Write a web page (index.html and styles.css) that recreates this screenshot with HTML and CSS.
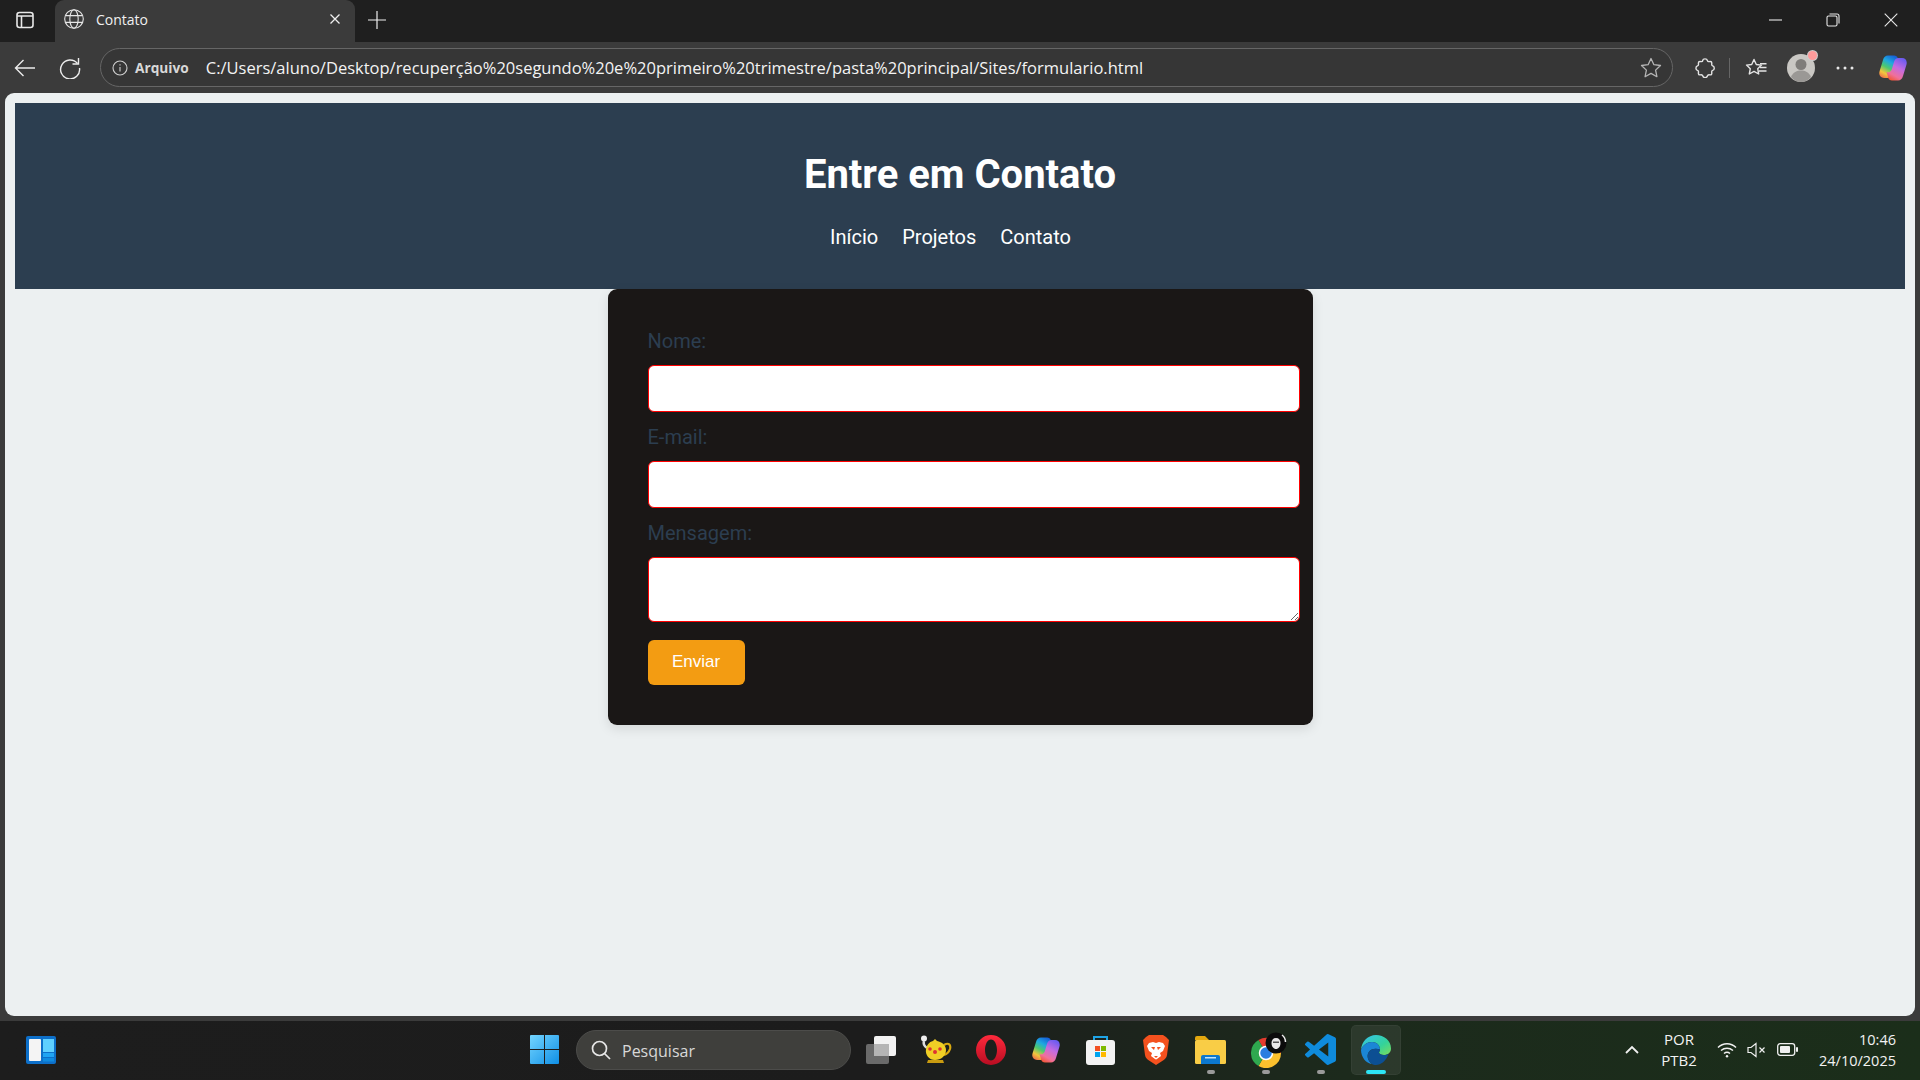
FILE: index.html
```html
<!DOCTYPE html>
<html lang="pt-BR">
<head>
<meta charset="utf-8">
<title>Contato</title>
<link rel="stylesheet" href="styles.css">
</head>
<body>
<div class="window">
  <div class="tabstrip">
    <div class="tabtoggle">
      <svg width="18" height="18" viewBox="0 0 18 18" fill="none" stroke="#e8e8e8" stroke-width="1.6"><rect x="1" y="1.5" width="16" height="15" rx="2.5"/><path d="M1 5h16M5.5 5v11.5"/></svg>
    </div>
    <div class="tab">
      <svg width="20" height="20" viewBox="0 0 20 20" fill="none" stroke="#e6e6e6" stroke-width="1.1"><circle cx="10" cy="10" r="9.3"/><ellipse cx="10" cy="10" rx="4.2" ry="9.3"/><path d="M1.4 6.6h17.2M1.4 13.4h17.2"/></svg>
      <span class="tab-title">Contato</span>
      <svg class="tab-close" width="12" height="12" viewBox="0 0 12 12" stroke="#f0f0f0" stroke-width="1.3"><path d="M1.5 1.5l9 9M10.5 1.5l-9 9"/></svg>
    </div>
    <svg class="newtab" width="18" height="18" viewBox="0 0 18 18" stroke="#efefef" stroke-width="1.2"><path d="M9 0v18M0 9h18"/></svg>
    <div class="winbtns">
      <svg width="14" height="14" viewBox="0 0 14 14" stroke="#e8e8e8" stroke-width="1.1"><path d="M1 7h13"/></svg>
      <svg width="14" height="14" viewBox="0 0 14 14" fill="none" stroke="#e8e8e8" stroke-width="1.1"><rect x="1" y="3" width="10" height="10" rx="1.5"/><path d="M3.5 1H11a2 2 0 0 1 2 2v7.500"/></svg>
      <svg width="14" height="14" viewBox="0 0 14 14" stroke="#e8e8e8" stroke-width="1.1"><path d="M.7.7l12.600 12.600M13.300.7L.7 13.300"/></svg>
    </div>
  </div>

  <div class="toolbar">
    <svg class="tb-back" width="22" height="18" viewBox="0 0 22 18" fill="none" stroke="#ececec" stroke-width="1.4"><path d="M21 9H1.500M9.500 1L1.500 9l8 8"/></svg>
    <svg class="tb-reload" width="22" height="22" viewBox="0 0 22 22" fill="none" stroke="#ececec" stroke-width="1.4"><path d="M18.500 6.500A9.500 9.500 0 1 0 20.500 11"/><path d="M19.500 1v6h-6"/></svg>
    <div class="address">
      <svg width="16" height="16" viewBox="0 0 16 16" fill="none" stroke="#d0d0d0" stroke-width="1.100"><circle cx="8" cy="8" r="7"/><path d="M8 7v4.500M8 4.300v1.300"/></svg>
      <span class="addr-label">Arquivo</span>
      <span class="addr-url">C:/Users/aluno/Desktop/recuperção%20segundo%20e%20primeiro%20trimestre/pasta%20principal/Sites/formulario.html</span>
      <svg class="addr-star" width="22" height="21" viewBox="0 0 22 21" fill="none" stroke="#b5b5b5" stroke-width="1.300" stroke-linejoin="round"><path d="M11 1.500l2.900 6.200 6.600.8-4.900 4.600 1.300 6.600L11 16.400l-5.900 3.300 1.300-6.600L1.500 8.500l6.600-.8z"/></svg>
    </div>
    <div class="tools">
      <svg width="20" height="20" viewBox="0 0 20 20" fill="none" stroke="#e4e4e4" stroke-width="1.400" stroke-linejoin="round"><path d="M7.500 2.800a2.600 2.600 0 0 1 5 0c.2.700.8.900 1.500.8l1.300-.1c.9 0 1.500.6 1.500 1.500l-.1 1.600c0 .7.300 1.100 1 1.300a2.400 2.400 0 0 1 0 4.500c-.7.200-1 .7-1 1.300l.1 1.700c0 .9-.6 1.500-1.500 1.500l-1.400-.1c-.7 0-1.200.3-1.400 1a2.500 2.500 0 0 1-4.800 0c-.2-.7-.7-1-1.400-1l-1.400.1c-.9 0-1.500-.6-1.500-1.500l.1-1.700c0-.7-.3-1.100-1-1.300a2.400 2.400 0 0 1 0-4.500c.7-.2 1-.6 1-1.300l-.1-1.600c0-.9.600-1.500 1.500-1.500l1.300.1c.7.100 1.300-.1 1.500-.8z"/></svg>
      <span class="tool-sep"></span>
      <svg width="22" height="20" viewBox="0 0 22 20" fill="none" stroke="#e4e4e4" stroke-width="1.400" stroke-linejoin="round"><path d="M9 1.500l2.300 5 5.200.600-3.800 3.600 1 5.300L9 13.400l-4.700 2.600 1-5.300L1.500 7.100l5.200-.600z"/><path d="M15 5.800h6.500M15 9.500h6.500M14 13h7.500"/></svg>
      <div class="profile">
        <svg width="28" height="28" viewBox="0 0 28 28"><circle cx="14" cy="14" r="14" fill="#c9c7c3"/><circle cx="14" cy="10.500" r="5.500" fill="#7f7d7a"/><path d="M4 23c2-5 6-6.500 10-6.500S22 18 24 23c-2.500 3-6 5-10 5s-7.500-2-10-5z" fill="#9a9895"/></svg>
        <span class="profile-dot"></span>
      </div>
      <svg width="18" height="4" viewBox="0 0 18 4" fill="#e8e8e8"><circle cx="2" cy="2" r="1.500"/><circle cx="9" cy="2" r="1.500"/><circle cx="16" cy="2" r="1.500"/></svg>
      <svg class="tool-copilot" width="28" height="28" viewBox="0 0 28 28">
        <defs>
          <linearGradient id="cpA" x1=".7" y1="0" x2=".2" y2="1"><stop offset="0" stop-color="#1560d8"/><stop offset=".3" stop-color="#1fa8e0"/><stop offset=".55" stop-color="#4cc96e"/><stop offset=".8" stop-color="#f4c63d"/><stop offset="1" stop-color="#f0734a"/></linearGradient>
          <linearGradient id="cpB" x1=".7" y1="0" x2=".2" y2="1"><stop offset="0" stop-color="#6d5cf0"/><stop offset=".4" stop-color="#c56be0"/><stop offset=".75" stop-color="#f0709a"/><stop offset="1" stop-color="#f2552f"/></linearGradient>
        </defs>
        <path d="M9 1.500h6c2 0 3.200 1 3.800 2.800L20.500 10c-2.500-1-4.500.2-5.300 2.800L13 20c-.8 2.500-2.200 4-4.500 4H5c-3.500 0-5.500-3-4.500-6.500L4 6c.8-2.800 2.500-4.500 5-4.500z" fill="url(#cpA)"/>
        <path d="M19 26.500h-6c-2 0-3.200-1-3.800-2.800L7.500 18c2.500 1 4.500-.2 5.300-2.800L15 8c.8-2.500 2.200-4 4.500-4H23c3.500 0 5.500 3 4.500 6.500L24 22c-.8 2.800-2.500 4.500-5 4.500z" fill="url(#cpB)"/>
      </svg>
    </div>
  </div>

  <div class="page">
    <header class="site-header">
      <h1 class="site-title">Entre em Contato</h1>
      <nav class="site-nav">
        <a class="site-link" href="#">Início</a>
        <a class="site-link" href="#">Projetos</a>
        <a class="site-link" href="#">Contato</a>
      </nav>
    </header>
    <form class="card">
      <label class="field-label" for="nome">Nome:</label>
      <input class="field" id="nome" type="text">
      <label class="field-label" for="email">E-mail:</label>
      <input class="field" id="email" type="email">
      <label class="field-label" for="msg">Mensagem:</label>
      <textarea class="field field-area" id="msg"></textarea>
      <button class="send" type="button">Enviar</button>
    </form>
  </div>

  <div class="taskbar">
    <svg class="widgets" width="30" height="28" viewBox="0 0 30 28"><rect width="30" height="28" rx="2" fill="#0d6fc9"/><rect x="3" y="3" width="12" height="22" rx="1" fill="#f4f4f4"/><rect x="17" y="3" width="11" height="13" fill="#5fd0ff"/><rect x="17" y="17" width="11" height="4" fill="#20a4f3"/><rect x="17" y="22" width="11" height="3.500" fill="#0f8be0"/></svg>
    <svg class="start" width="29" height="29" viewBox="0 0 29 29"><defs><linearGradient id="winG" x1="0" y1="0" x2="1" y2="1"><stop offset="0" stop-color="#74d5ff"/><stop offset="1" stop-color="#0f8fe6"/></linearGradient></defs><path d="M1 0h13v14H0V1a1 1 0 0 1 1-1zM15 0h13a1 1 0 0 1 1 1v13H15zM0 15h14v14H1a1 1 0 0 1-1-1zM15 15h14v13a1 1 0 0 1-1 1H15z" fill="url(#winG)"/></svg>
    <div class="search">
      <svg width="20" height="20" viewBox="0 0 20 20" fill="none" stroke="#e6e6e6" stroke-width="1.700"><circle cx="8.500" cy="8.500" r="7"/><path d="M13.500 13.500l5.500 5.500"/></svg>
      <span class="search-text">Pesquisar</span>
    </div>
    <div class="apps">
      <div class="app">
        <svg width="30" height="28" viewBox="0 0 30 28"><rect x="0" y="8" width="23" height="20" rx="2" fill="#6a6a6a"/><rect x="8" y="0" width="22" height="20" rx="2" fill="#f2f2f2"/><rect x="8" y="8" width="15" height="12" fill="#b5b5b5"/></svg>
      </div>
      <div class="app">
        <svg width="32" height="30" viewBox="0 0 32 30"><circle cx="4" cy="3.500" r="3" fill="#eee"/><path d="M4 6c-1 3 0 5 3 7" stroke="#ddd" stroke-width="2.500" fill="none"/><path d="M24 10c5-3 7 0 6 4-1 3-3 5-6 6" fill="none" stroke="#d9a90f" stroke-width="2.200"/><path d="M13 6l2-2 2 2c5 1 9 4 9 9 0 6-5 10-11 10S5 20 6 14c.6-4 3-7 7-8z" fill="#f0cf25"/><path d="M8 25h15l1 3H7z" fill="#c99b10"/><circle cx="10" cy="14" r="1.800" fill="#d33"/><circle cx="15" cy="17" r="2" fill="#d33"/><circle cx="20" cy="14" r="1.800" fill="#d33"/></svg>
      </div>
      <div class="app">
        <svg width="30" height="30" viewBox="0 0 30 30"><defs><linearGradient id="opG" x1="0" y1="0" x2="0" y2="1"><stop offset="0" stop-color="#ff2a3c"/><stop offset="1" stop-color="#b80d22"/></linearGradient></defs><path fill-rule="evenodd" d="M15 0a15 15 0 1 1 0 30 15 15 0 0 1 0-30zm0 4.500c-3.500 0-6 4.700-6 10.500s2.500 10.500 6 10.500 6-4.700 6-10.500-2.500-10.500-6-10.500z" fill="url(#opG)"/></svg>
      </div>
      <div class="app">
        <svg width="28" height="28" viewBox="0 0 28 28"><path d="M9 1.500h6c2 0 3.200 1 3.800 2.800L20.500 10c-2.500-1-4.500.2-5.300 2.800L13 20c-.8 2.500-2.200 4-4.500 4H5c-3.500 0-5.500-3-4.500-6.500L4 6c.8-2.800 2.500-4.500 5-4.500z" fill="url(#cpA)"/><path d="M19 26.500h-6c-2 0-3.200-1-3.800-2.800L7.500 18c2.500 1 4.500-.2 5.300-2.800L15 8c.8-2.500 2.200-4 4.500-4H23c3.500 0 5.500 3 4.500 6.500L24 22c-.8 2.800-2.500 4.500-5 4.500z" fill="url(#cpB)"/></svg>
      </div>
      <div class="app">
        <svg width="29" height="30" viewBox="0 0 29 30"><path d="M8 6V2h13v4" fill="none" stroke="#1ea4e6" stroke-width="2"/><rect y="5" width="29" height="25" rx="3" fill="#f3f3f3"/><rect x="9" y="11" width="5" height="5" fill="#f25022"/><rect x="15" y="11" width="5" height="5" fill="#7fba00"/><rect x="9" y="17" width="5" height="5" fill="#00a4ef"/><rect x="15" y="17" width="5" height="5" fill="#ffb900"/></svg>
      </div>
      <div class="app">
        <svg width="26" height="30" viewBox="0 0 26 30"><path d="M6 0h14l3 2 3 3-2 15c-.5 3-2 4-4 5.500L13 30l-7-4.500C4 24 2.500 23 2 20L0 5l3-3z" fill="#f4511e"/><path d="M6 8l4-1 3 1 3-1 4 1 2 3-2 5-3 2 1 3-4 3-1 .5-1-.5-4-3 1-3-3-2-2-5z" fill="#fff"/><path d="M8 12h4l-1 3zM18 12h-4l1 3zM11 21h4l-2 2z" fill="#f4511e"/></svg>
      </div>
      <div class="app">
        <svg width="31" height="28" viewBox="0 0 31 28"><path d="M0 2a2 2 0 0 1 2-2h8l4 4H0z" fill="#e3a80f"/><rect y="4" width="31" height="24" rx="1.500" fill="#f9cd46"/><path d="M6 28v-7a2 2 0 0 1 2-2h15a2 2 0 0 1 2 2v7z" fill="#0c78cf"/><rect x="10" y="21" width="11" height="1.500" fill="#bfe3fb"/></svg>
        <span class="run-dot"></span>
      </div>
      <div class="app">
        <svg class="chrome" width="36" height="36" viewBox="0 0 36 36">
          <path d="M15 21L7.500 8A15 15 0 0 1 30 21z" fill="#e33b2e"/>
          <path d="M15 21h15A15 15 0 0 1 7.500 34z" fill="#fbc02d"/>
          <path d="M15 21L7.500 34A15 15 0 0 1 7.500 8z" fill="#2fa84f"/>
          <circle cx="15" cy="21" r="6.500" fill="#2a7de1" stroke="#fff" stroke-width="1.500"/>
          <circle cx="25" cy="11" r="10.500" fill="#0b0b0b"/>
          <path d="M25 6c3 0 4.500 2 4.500 5 0 3.500-2 6-4.500 6s-4.500-2.500-4.500-6c0-3 1.500-5 4.500-5z" fill="#e8e8e8"/>
          <path d="M22 9.500h6v1.500h-6z" fill="#555"/>
          <path d="M31 3a9 9 0 0 1 3.500 7" fill="none" stroke="#eee" stroke-width="1.500"/>
        </svg>
        <span class="run-dot"></span>
      </div>
      <div class="app">
        <svg width="31" height="31" viewBox="0 0 24 24"><path fill="#0f8bdc" d="M23.150 2.587L18.210.21a1.494 1.494 0 0 0-1.705.29l-9.460 8.630-4.120-3.128a.999.999 0 0 0-1.276.057L.327 7.261A1 1 0 0 0 .326 8.740L3.899 12 .326 15.260a1 1 0 0 0 .001 1.479L1.650 17.940a.999.999 0 0 0 1.276.057l4.120-3.128 9.460 8.630a1.492 1.492 0 0 0 1.704.29l4.942-2.377A1.500 1.500 0 0 0 24 20.060V3.939a1.500 1.500 0 0 0-.85-1.352zm-5.146 14.861L10.826 12l7.178-5.448v10.896z"/></svg>
        <span class="run-dot"></span>
      </div>
      <div class="app app-active">
        <svg width="30" height="30" viewBox="0 0 30 30"><defs><linearGradient id="edA" x1="0" y1="0" x2="1" y2="1"><stop offset="0" stop-color="#35c1f1"/><stop offset=".6" stop-color="#34d399"/><stop offset="1" stop-color="#7ddc5c"/></linearGradient></defs><path d="M15 0c8 0 15 5.500 15 13.500 0 4-3 6.500-7 6.500-3 0-5-1-5-2.500 0-.8 1-1.200 1-3C19 10 15.500 7 11 7 6 7 1.500 10.500 0 15 .5 6.500 7 0 15 0z" fill="url(#edA)"/><path d="M0 15c1.500-4.500 6-8 11-8 4.500 0 8 3 8 7.500-3-1-9-1.500-11.500 3C5.500 21 7 26 11 29 5 28.500 0 22 0 15z" fill="#1b86d6"/><path d="M7.500 17.500C10 13 16 13.500 19 14.500c0 1.800-1 2.200-1 3 0 1.500 2 2.500 5 2.500 1.500 0 3-.4 4.500-1C25 26 20 30 15 30c-1.500 0-3-.3-4-1-4-3-5.500-8-3.500-11.500z" fill="#0c4f93"/></svg>
        <span class="run-bar"></span>
      </div>
    </div>
    <div class="tray">
      <svg class="tray-chev" width="14" height="9" viewBox="0 0 14 9" fill="none" stroke="#f0f0f0" stroke-width="1.800"><path d="M1 8l6-6 6 6"/></svg>
      <div class="tray-lang"><span>POR</span><span>PTB2</span></div>
      <svg class="tray-wifi" width="20" height="16" viewBox="0 0 20 16" fill="none" stroke="#f0f0f0" stroke-width="1.500"><path d="M1 5.500c5-5 13-5 18 0M4 8.500c3.500-3 8.500-3 12 0M7 11.500c1.800-1.500 4.200-1.500 6 0"/><circle cx="10" cy="14.300" r="1.200" fill="#f0f0f0" stroke="none"/></svg>
      <svg class="tray-sound" width="20" height="16" viewBox="0 0 20 16" fill="none" stroke="#f0f0f0" stroke-width="1.200"><path d="M1 5.500h3L9 1.500v13l-5-4H1z"/><path d="M12.500 5.500l5 5M17.500 5.500l-5 5"/></svg>
      <svg class="tray-batt" width="21" height="13" viewBox="0 0 21 13"><rect x=".7" y=".7" width="17" height="11.600" rx="2.500" fill="none" stroke="#f0f0f0" stroke-width="1.300"/><rect x="3" y="3" width="10" height="7" rx="1" fill="#f0f0f0"/><rect x="19" y="4" width="2" height="5" rx="1" fill="#f0f0f0"/></svg>
      <div class="tray-clock"><span>10:46</span><span>24/10/2025</span></div>
    </div>
  </div>
</div>
</body>
</html>
```
FILE: styles.css
```css
* { box-sizing: border-box; }
html, body { margin: 0; padding: 0; height: 100%; overflow: hidden; }
body { font-family: "Open Sans", "Noto Sans", sans-serif; }

.window { width: 1920px; height: 1080px; display: flex; flex-direction: column; background: #3b3b3b; }

/* tab strip */
.tabstrip { height: 42px; flex: none; background: #1f1f1f; display: flex; align-items: center; padding: 0 0 2px 16px; }
.tabtoggle { width: 39px; display: flex; flex: none; }
.tab { width: 300px; height: 42px; align-self: flex-end; margin-bottom: -2px; background: #3b3b3b; border-radius: 9px 9px 0 0; display: flex; align-items: center; padding: 0 14px 4px 9px; color: #f0f0f0; }
.tab-title { margin-left: 12px; font-size: 14px; font-family: "Open Sans", sans-serif; }
.tab-close { margin-left: auto; }
.newtab { margin-left: 13px; }
.winbtns { margin-left: auto; display: flex; align-items: center; gap: 44px; padding-right: 22px; }

/* toolbar */
.toolbar { height: 51px; flex: none; display: flex; align-items: center; padding: 0 0 0 14px; background: #3b3b3b; }
.tb-back { flex: none; }
.tb-reload { flex: none; margin-left: 23px; }
.address { width: 1573px; flex: none; height: 39px; margin-left: 19px; border: 1px solid #666; border-radius: 20px; display: flex; align-items: center; padding: 0 7px 0 11px; background: #363636; color: #f3f3f3; }
.addr-label { margin-left: 7px; font-size: 13.700px; font-weight: 700; color: #d8d8d8; }
.addr-url { margin-left: 17px; font-size: 16.500px; white-space: nowrap; }
.addr-star { margin-left: auto; margin-right: 3px; }
.tools { display: flex; align-items: center; margin-left: 22px; flex: none; }
.tool-sep { width: 1px; height: 20px; background: #666; margin: 0 15px 0 14px; }
.profile { position: relative; margin-left: 20px; margin-right: 21px; display: flex; }
.profile-dot { position: absolute; top: -3px; right: -2px; width: 9px; height: 9px; border-radius: 50%; background: #ff9b9b; box-shadow: 0 0 0 1px #ccc; }
.tool-copilot { margin-left: 25px; }

/* page */
.page { flex: 1; margin: 0 5px; padding: 10px; background: #ecf0f1; border-radius: 9px; display: flex; flex-direction: column; align-items: center; font-family: Roboto, sans-serif; min-height: 0; }
.site-header { width: 100%; height: 186px; flex: none; background: #2c3e50; color: #fff; display: flex; flex-direction: column; align-items: center; padding-top: 49px; }
.site-title { margin: 0; font-size: 40px; line-height: 46px; font-weight: 700; }
.site-nav { margin: 27px 19px 0 0; display: flex; gap: 24px; }
.site-link { color: #fff; text-decoration: none; font-size: 20px; line-height: 24px; }

.card { width: 705px; height: 436px; flex: none; background: #1a1716; border-radius: 9px; padding: 40px 0 40px 40px; box-shadow: 0 4px 12px rgba(0,0,0,.1); display: flex; flex-direction: column; align-items: flex-start; }
.field-label { height: 36px; flex: none; font-size: 20px; line-height: 24px; color: #2c3e50; }
.field { display: block; width: 652px; height: 47px; flex: none; border: 1px solid #f00; border-radius: 6px; background: #fff; margin: 0 0 13px; padding: 0; outline: none; }
.field-area { height: 65px; margin-bottom: 18px; resize: vertical; }
.send { width: 97px; height: 45px; flex: none; border: 0; border-radius: 6px; background: #f39c12; color: #fff; font-family: "Liberation Sans", sans-serif; font-size: 17px; padding: 0 0 2px; }

/* taskbar */
.page + .taskbar { margin-top: 5px; }
.taskbar { height: 59px; flex: none; display: flex; align-items: center; background: linear-gradient(90deg, #1d1d1d 0%, #1c1c1c 45%, #1c2a1c 70%, #1b2e1a 100%); position: relative; padding: 0 0 2px 26px; }
.widgets { flex: none; }
.start { flex: none; margin-left: 474px; }
.search { width: 275px; height: 40px; margin-left: 17px; flex: none; border-radius: 20px; background: #3f3f3c; border: 1px solid #4c4c4a; display: flex; align-items: center; padding-left: 14px; color: #d8d8d8; }
.search-text { margin-left: 11px; padding-top: 2px; font-size: 16px; }
.apps { display: flex; flex: none; margin-left: 2px; }
.app { width: 55px; height: 50px; display: flex; align-items: center; justify-content: center; position: relative; border-radius: 5px; }
.chrome { margin-left: 6px; }
.app-active { width: 50px; margin: 0 2px 0 3px; background: rgba(255,255,255,.07); box-shadow: inset 0 0 0 1px rgba(255,255,255,.04); }
.run-dot { position: absolute; left: 50%; bottom: 1px; width: 8px; height: 4px; margin-left: -4px; border-radius: 2px; background: #9a9a9a; }
.run-bar { position: absolute; left: 50%; bottom: 1px; width: 20px; height: 4px; margin-left: -10px; border-radius: 2px; background: #2de5f5; }
.tray { display: flex; align-items: center; margin-left: auto; padding-right: 24px; color: #f2f2f2; font-size: 15px; line-height: 21px; }
.tray-lang { display: flex; flex-direction: column; align-items: center; width: 60px; margin-left: 10px; }
.tray-wifi { margin-left: 8px; }
.tray-sound { margin-left: 10px; }
.tray-batt { margin-left: 10px; }
.tray-clock { display: flex; flex-direction: column; align-items: flex-end; margin-left: 21px; font-size: 14.500px; }
```
